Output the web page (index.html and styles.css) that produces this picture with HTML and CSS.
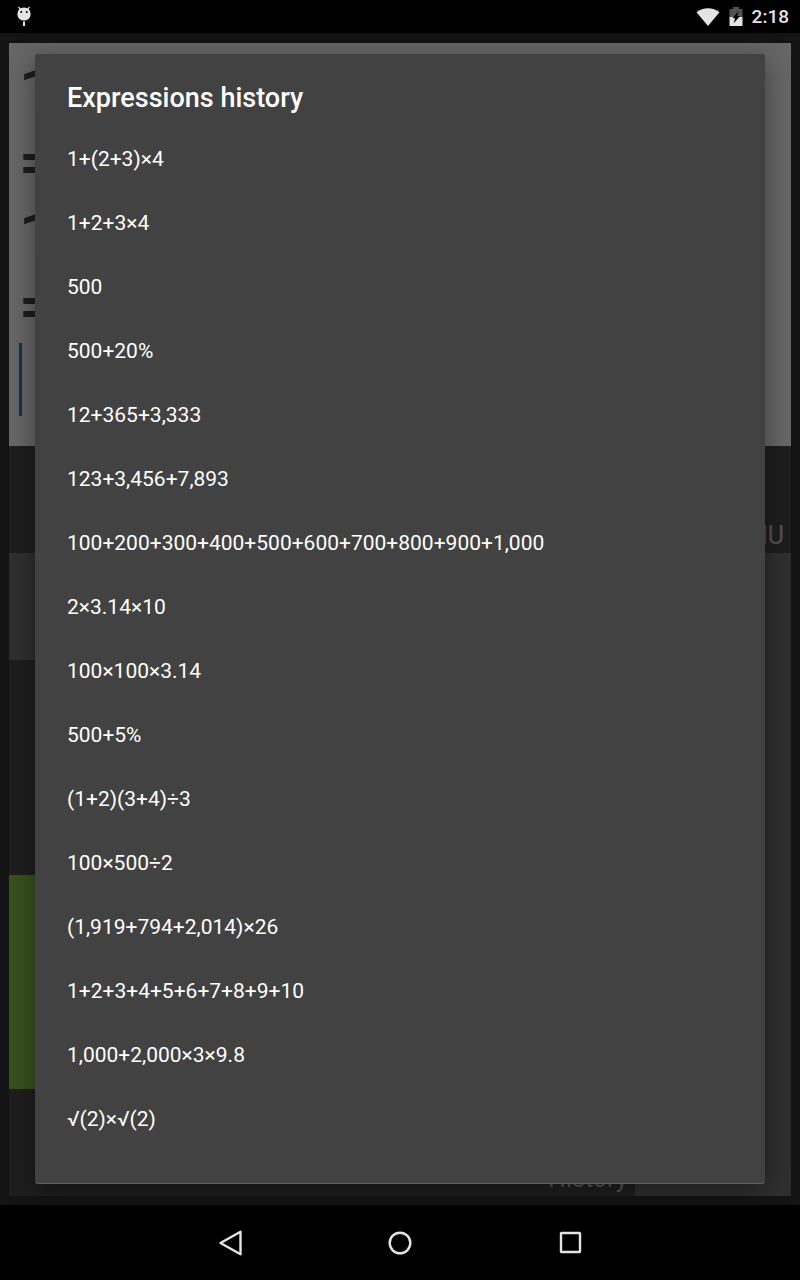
FILE: index.html
```html
<!DOCTYPE html>
<html lang="en">
<head>
    <meta charset="UTF-8">
    <meta name="viewport" content="width=device-width, initial-scale=1.0">
    <title>Calculator</title>
    <link rel="stylesheet" href="styles.css">
</head>
<body>
    <header class="status-bar">
        <svg class="debug-icon" width="14" height="21" viewBox="0 0 14 21">
            <path d="M1.5 1L4 4M12.5 1L10 4" stroke="#e4e4e4" stroke-width="1.2"/>
            <ellipse cx="7" cy="8" rx="6.7" ry="6.6" fill="#e4e4e4"/>
            <circle cx="4.2" cy="6" r="1" fill="#000"/>
            <circle cx="9.8" cy="6" r="1" fill="#000"/>
            <path d="M7 15.5V20" stroke="#e4e4e4" stroke-width="2"/>
        </svg>
        <div class="status-icons">
            <svg width="24" height="18" viewBox="0 0 24 18">
                <path d="M.5 4.2C7-1.2 17-1.2 23.5 4.2L12 18z" fill="#e4e4e4"/>
            </svg>
            <svg class="battery-icon" width="14" height="19" viewBox="0 0 14 19">
                <path d="M4 0h6v2h3.5v8H.5V2H4z" fill="#525252"/>
                <path d="M.5 10h13v9H.5z" fill="#e4e4e4"/>
                <path d="M9.5 4L3.5 11.2h2.7L4.5 16.5L11 9H8z" fill="#000"/>
            </svg>
            <span class="clock">2:18</span>
        </div>
    </header>

    <main class="screen">
        <div class="calculator">
            <div class="display">
                <div>1</div>
                <div>=</div>
                <div>1</div>
                <div>=</div>
                <div class="cursor"></div>
            </div>
            <div class="keypad">
                <div class="key key-menu">MENU</div>
                <div class="key key-function"></div>
                <div class="key key-side"></div>
                <div class="key key-green"></div>
                <div class="key key-history">History</div>
            </div>
        </div>
    </main>

    <div class="overlay">
        <section class="dialog" role="dialog" aria-labelledby="dialog-title">
            <h1 class="dialog-title" id="dialog-title">Expressions history</h1>
            <ul class="history">
                <li><button>1+(2+3)×4</button></li>
                <li><button>1+2+3×4</button></li>
                <li><button>500</button></li>
                <li><button>500+20%</button></li>
                <li><button>12+365+3,333</button></li>
                <li><button>123+3,456+7,893</button></li>
                <li><button>100+200+300+400+500+600+700+800+900+1,000</button></li>
                <li><button>2×3.14×10</button></li>
                <li><button>100×100×3.14</button></li>
                <li><button>500+5%</button></li>
                <li><button>(1+2)(3+4)÷3</button></li>
                <li><button>100×500÷2</button></li>
                <li><button>(1,919+794+2,014)×26</button></li>
                <li><button>1+2+3+4+5+6+7+8+9+10</button></li>
                <li><button>1,000+2,000×3×9.8</button></li>
                <li><button>√(2)×√(2)</button></li>
            </ul>
        </section>
    </div>

    <nav class="nav-bar">
        <button aria-label="Back">
            <svg width="28" height="28" viewBox="0 0 28 28">
                <path d="M4.5 14L24.5 2.8V25.2z"/>
            </svg>
        </button>
        <button aria-label="Home">
            <svg width="28" height="28" viewBox="0 0 28 28">
                <circle cx="14" cy="14" r="10.3"/>
            </svg>
        </button>
        <button aria-label="Recent apps">
            <svg width="28" height="28" viewBox="0 0 28 28">
                <rect x="5" y="4" width="19" height="19" rx=".5"/>
            </svg>
        </button>
    </nav>
</body>
</html>
```
FILE: styles.css
```css
* {
    box-sizing: border-box;
}

body {
    display: flex;
    flex-direction: column;
    position: relative;
    min-height: 100vh;
    margin: 0;
    background-color: #000000;
    color: #ffffff;
    font-family: Roboto, sans-serif;
}

button {
    padding: 0;
    border: none;
    background: none;
    color: inherit;
    font: inherit;
    cursor: pointer;
}

svg {
    display: block;
}

/* status bar */
.status-bar {
    display: flex;
    justify-content: space-between;
    align-items: center;
    height: 33px;
    padding: 0 11px 0 17px;
}

.status-icons {
    display: flex;
    align-items: center;
    gap: 9px;
}

.clock {
    color: #e4e4e4;
    font-size: 19px;
    font-weight: 500;
    line-height: 33px;
}

/* calculator */
.screen {
    display: flex;
    flex: 1;
    padding: 10px 9px 9px;
    background-color: #323232;
}

.calculator {
    display: flex;
    flex-direction: column;
    flex: 1;
}

.display {
    padding: 12px 10px 30px;
    background-color: #ffffff;
    color: #464646;
    font-size: 62px;
    font-weight: 500;
    line-height: 72px;
}

.cursor {
    width: 3px;
    height: 73px;
    background-color: #3a78d4;
}

.keypad {
    display: grid;
    flex: 1;
    grid-template-columns: repeat(5, 1fr);
    grid-template-rows: repeat(7, 1fr);
    background-color: #4d4d4d;
}

.key {
    display: flex;
    justify-content: flex-end;
    align-items: flex-end;
    padding: 0 7px;
    color: #d0d0d0;
    font-size: 25px;
    line-height: 34px;
}

.key-menu {
    grid-area: 1 / 5;
}

.key-function {
    grid-area: 2 / 1 / 3 / 5;
    background-color: #757575;
}

.key-side {
    grid-area: 2 / 5 / 8 / 6;
    background-color: #757575;
}

.key-green {
    grid-area: 5 / 1 / 7 / 2;
    background-color: #8cca46;
}

.key-history {
    grid-area: 7 / 4;
}

/* history dialog */
.overlay {
    position: absolute;
    top: 33px;
    right: 0;
    bottom: 75px;
    left: 0;
    padding: 21px 35px;
    overflow: hidden;
    background-color: rgba(0, 0, 0, 0.6);
}

.dialog {
    padding: 24px 32px 32px;
    border-bottom: 1px solid #606060;
    border-radius: 3px;
    background-color: #424242;
    box-shadow: 0 6px 28px rgba(0, 0, 0, 0.4);
}

.dialog-title {
    margin: 0 0 9px;
    font-size: 27px;
    font-weight: 500;
    line-height: 40px;
}

.history {
    margin: 0;
    padding: 0;
    list-style: none;
}

.history button {
    display: block;
    width: 100%;
    height: 64px;
    font-size: 21px;
    text-align: left;
}

/* navigation bar */
.nav-bar {
    display: flex;
    justify-content: center;
    align-items: center;
    gap: 142px;
    height: 75px;
}

.nav-bar svg {
    fill: none;
    stroke: #e4e4e4;
    stroke-width: 2.4;
    stroke-linejoin: round;
}
```
